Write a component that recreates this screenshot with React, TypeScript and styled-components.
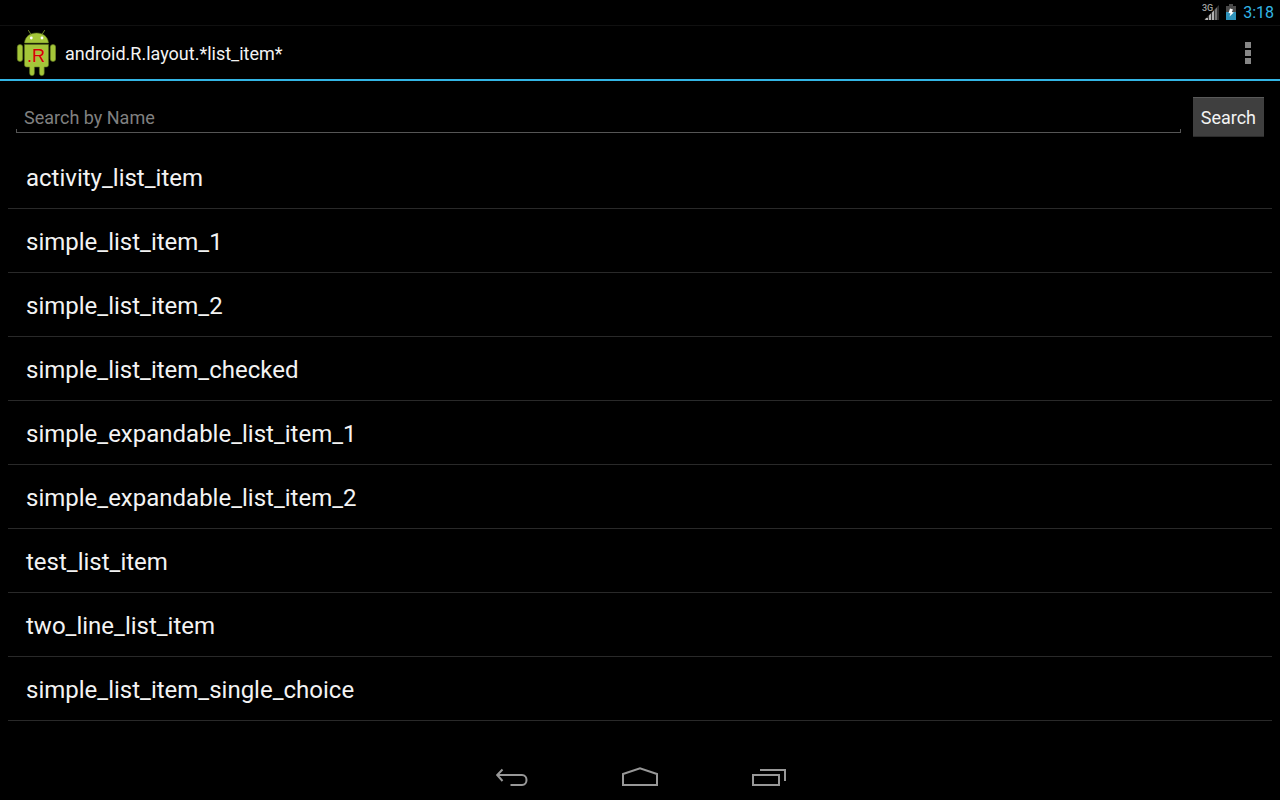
import React from 'react';
import styled, { createGlobalStyle } from 'styled-components';

const GlobalStyle = createGlobalStyle`
  *, *::before, *::after { box-sizing: border-box; }
  body {
    margin: 0;
    background: #000;
    color: #f3f3f3;
    font-family: Roboto, "Liberation Sans", sans-serif;
  }
  button, input { font: inherit; color: inherit; }
`;

const Screen = styled.div`
  display: flex;
  flex-direction: column;
  min-height: 100vh;
`;

const StatusBar = styled.div`
  display: flex;
  align-items: center;
  justify-content: flex-end;
  gap: 7px;
  height: 26px;
  padding-right: 6px;
  border-bottom: 1px solid #101010;
`;

const Clock = styled.time`
  color: #33b5e5;
  font-size: 16px;
  line-height: 24px;
`;

const ActionBar = styled.header`
  display: flex;
  align-items: center;
  gap: 9px;
  height: 55px;
  padding: 0 16px;
  border-bottom: 2px solid #33b5e5;
`;

const Title = styled.h1`
  flex: 1;
  margin: 0;
  padding-top: 2px;
  font-size: 18px;
  font-weight: 400;
  line-height: 24px;
`;

const IconButton = styled.button<{ $width: number }>`
  display: flex;
  align-items: center;
  justify-content: center;
  width: ${({ $width }) => $width}px;
  height: 48px;
  padding: 0;
  border: 0;
  background: transparent;
  cursor: pointer;
`;

const Content = styled.main`
  flex: 1;
  padding: 16px 8px 0;
`;

const SearchForm = styled.form`
  display: flex;
  align-items: stretch;
  gap: 12px;
  padding: 0 8px 8px;
`;

const SearchField = styled.div`
  flex: 1;
  padding-bottom: 4px;
`;

const SearchInput = styled.input`
  display: block;
  width: 100%;
  height: 36px;
  padding: 5px 8px 0;
  border: 0;
  outline: 0;
  background:
    linear-gradient(#555, #555) left bottom / 1px 4px no-repeat,
    linear-gradient(#555, #555) right bottom / 1px 4px no-repeat,
    linear-gradient(#555, #555) left bottom / 100% 1px no-repeat;
  font-size: 18px;
  line-height: 24px;
  &::placeholder { color: #808080; opacity: 1; }
`;

const SearchButton = styled.button`
  height: 40px;
  padding: 2px 8px 0;
  border: 0;
  border-top: 1px solid #5a5a5a;
  border-bottom: 1px solid #2c2c2c;
  background: #3f3f3f;
  font-size: 18px;
  line-height: 24px;
  cursor: pointer;
`;

const List = styled.ul`
  margin: 0;
  padding: 0;
  list-style: none;
`;

const Row = styled.li`
  border-bottom: 1px solid #292929;
`;

const RowButton = styled.button`
  display: block;
  width: 100%;
  height: 63px;
  padding: 2px 18px 0;
  border: 0;
  background: transparent;
  font-size: 24px;
  line-height: 32px;
  text-align: left;
  cursor: pointer;
`;

const NavigationBar = styled.nav`
  display: flex;
  justify-content: center;
  height: 48px;
`;

const layouts = [
  'activity_list_item',
  'simple_list_item_1',
  'simple_list_item_2',
  'simple_list_item_checked',
  'simple_expandable_list_item_1',
  'simple_expandable_list_item_2',
  'test_list_item',
  'two_line_list_item',
  'simple_list_item_single_choice',
];

const SignalLabel = styled.span`
  align-self: flex-start;
  margin-right: -16px;
  padding-top: 4px;
  color: #a0a0a0;
  font-size: 9px;
  font-weight: 500;
  line-height: 9px;
`;

function SignalIcon() {
  return (
    <svg width="15" height="17" viewBox="0 0 15 17" aria-hidden="true">
      <path d="M15 1V16H0Z" fill="#333" />
      <path d="M2 14h2v2H1zM5 11.500l2-2V16H5zM8 8.500l2-2V16H8z" fill="#b4b4b4" />
      <path d="M11 5.500l2-2V16h-2z" fill="#777" />
    </svg>
  );
}

function BatteryIcon() {
  return (
    <svg width="10" height="17" viewBox="0 0 10 17" aria-hidden="true">
      <path d="M3 0h4v2h3v6H0V2h3z" fill="#4a4a4a" />
      <path d="M0 8h10v8H0z" fill="#2f93bb" />
      <path d="M4 4.500L7 5.500 5.800 8l2 .5L3.500 12.500l1-3.200L2.500 9z" fill="#fff" />
    </svg>
  );
}

function AppIcon() {
  return (
    <svg width="40" height="48" viewBox="0 0 40 48" aria-hidden="true">
      <g fill="#a4c639" stroke="#5f7620" strokeWidth=".6">
        <path d="M12.500 1.500l2.500 4M28.500 1.500L26 5.500" stroke="#71892a" strokeWidth="1" strokeLinecap="round" />
        <path d="M8.500 14C9 7.500 14 4 20.500 4S32 7.500 32.500 14z" />
        <rect x="1.300" y="15.500" width="5.400" height="17" rx="2.700" />
        <rect x="34.300" y="15.500" width="5.400" height="17" rx="2.700" />
        <path d="M8.500 15.500h24V36a2 2 0 0 1-2 2h-2.300v6.300a2.400 2.400 0 0 1-4.800 0V38h-5v6.300a2.400 2.400 0 0 1-4.800 0V38h-3.100a2 2 0 0 1-2-2z" />
      </g>
      <circle cx="15.300" cy="9" r="1.400" fill="#fff" />
      <circle cx="26" cy="9" r="1.400" fill="#fff" />
      <text x="11" y="33" fill="#d40000" stroke="#d9b070" strokeWidth=".6" paintOrder="stroke" fontFamily="Liberation Sans, sans-serif" fontSize="18">
        .R
      </text>
    </svg>
  );
}

function OverflowIcon() {
  return (
    <svg width="6" height="22" viewBox="0 0 6 22" fill="#868686" aria-hidden="true">
      <path d="M0 0h6v6H0zM0 8h6v6H0zM0 16h6v6H0z" />
    </svg>
  );
}

const navIcons = [
  {
    name: 'Back',
    path: 'M8.500 13.500L3.200 19l5.300 6M3.500 19H28c6 0 6 10 0 10H16.500',
  },
  {
    name: 'Home',
    path: 'M1 29V18L18 12.300 35 18v11z',
  },
  {
    name: 'Recent apps',
    path: 'M3 19h26v10H3zM10 14h25V25',
  },
];

export default function App() {
  return (
    <Screen>
      <GlobalStyle />
      <StatusBar>
        <SignalLabel>3G</SignalLabel>
        <SignalIcon />
        <BatteryIcon />
        <Clock>3:18</Clock>
      </StatusBar>
      <ActionBar>
        <AppIcon />
        <Title>android.R.layout.*list_item*</Title>
        <IconButton type="button" $width={32} aria-label="More options">
          <OverflowIcon />
        </IconButton>
      </ActionBar>
      <Content>
        <SearchForm onSubmit={(event) => event.preventDefault()}>
          <SearchField>
            <SearchInput type="text" placeholder="Search by Name" aria-label="Search by Name" />
          </SearchField>
          <SearchButton type="submit">Search</SearchButton>
        </SearchForm>
        <List>
          {layouts.map((name) => (
            <Row key={name}>
              <RowButton type="button">{name}</RowButton>
            </Row>
          ))}
        </List>
      </Content>
      <NavigationBar aria-label="System">
        {navIcons.map(({ name, path }) => (
          <IconButton key={name} type="button" $width={128} aria-label={name}>
            <svg width="36" height="40" viewBox="0 0 36 40" fill="none" stroke="#989898" strokeWidth="2" aria-hidden="true">
              <path d={path} />
            </svg>
          </IconButton>
        ))}
      </NavigationBar>
    </Screen>
  );
}
